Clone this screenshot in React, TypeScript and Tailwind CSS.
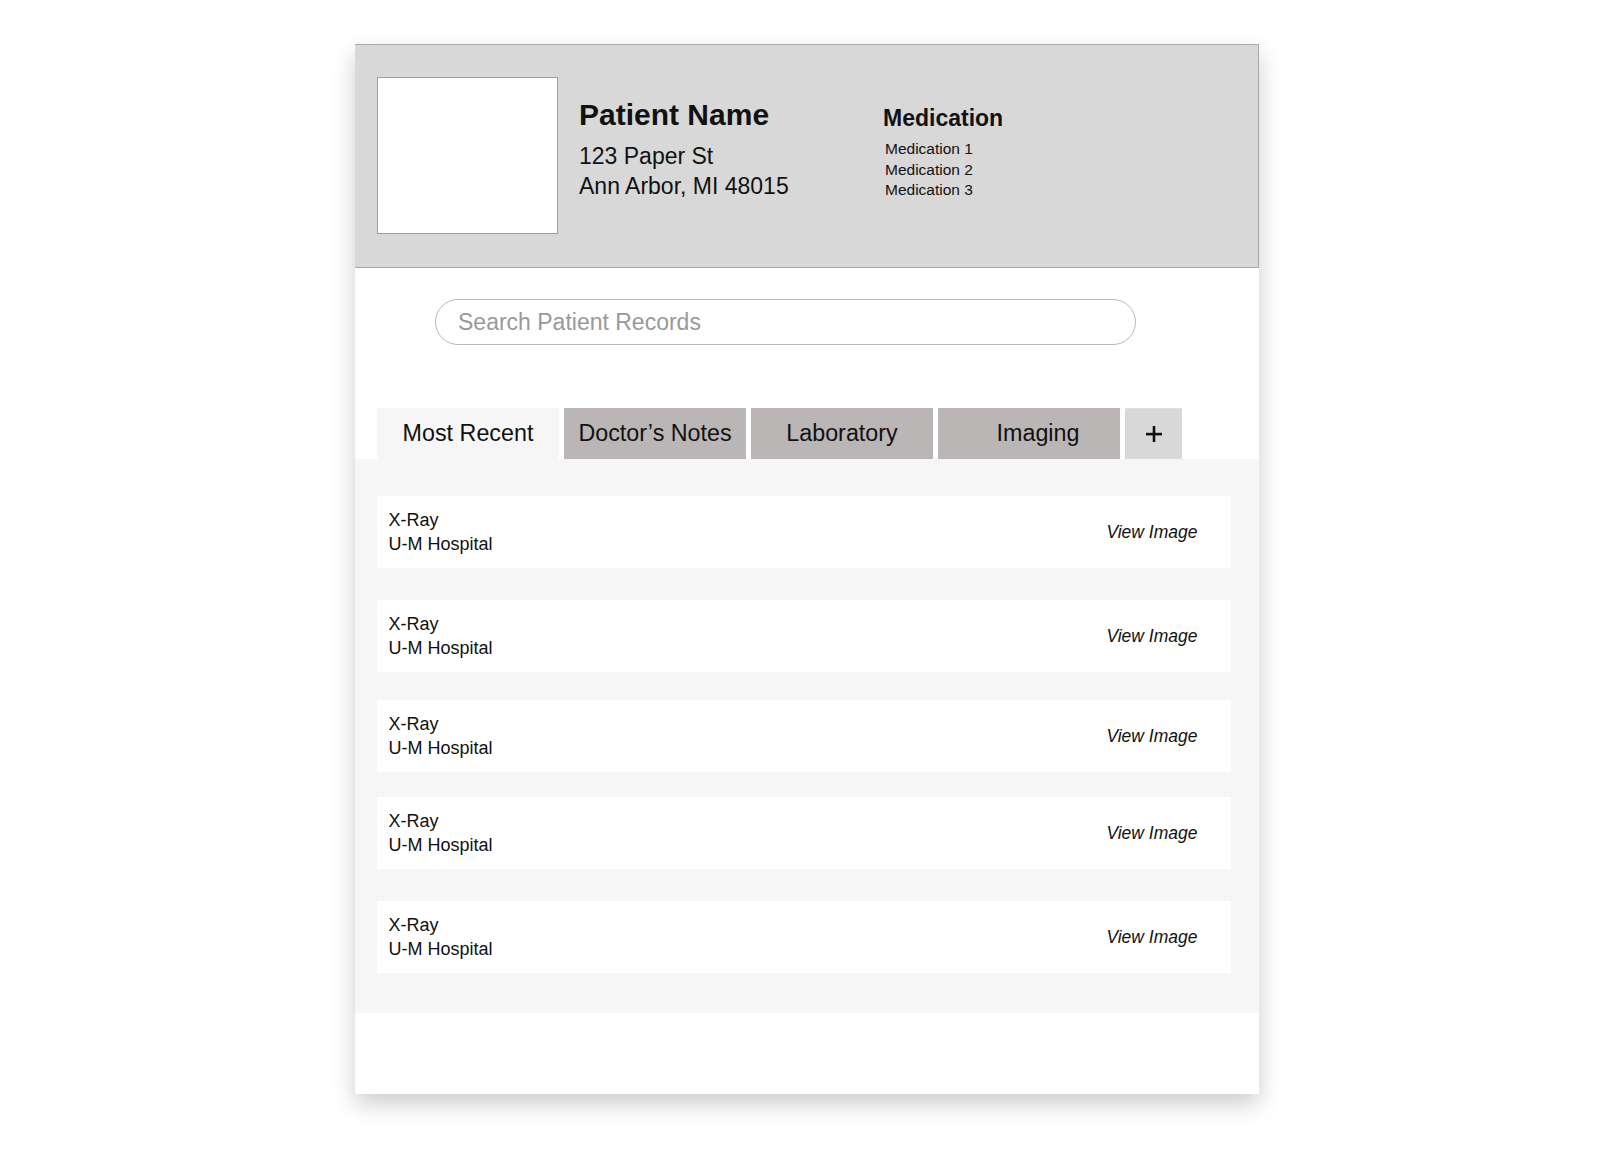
const records = [
  { id: 1, spacing: "mt-[37px]" },
  { id: 2, spacing: "mt-[32px]" },
  { id: 3, spacing: "mt-[28px]" },
  { id: 4, spacing: "mt-[25px]" },
  { id: 5, spacing: "mt-[32px]" },
]

const tabs = [
  { label: "Most Recent", className: "bg-[#f6f6f6]" },
  { label: "Doctor’s Notes", className: "bg-[#bbb6b6]" },
  { label: "Laboratory", className: "bg-[#bbb6b6]" },
  { label: "Imaging", className: "bg-[#bbb6b6] pl-[18px]" },
]

function PlusIcon() {
  return (
    <svg width="16" height="16" viewBox="0 0 16 16" fill="#111">
      <rect x="0" y="6.8" width="16" height="2.6" />
      <rect x="6.7" y="0" width="2.6" height="16" />
    </svg>
  )
}

export default function App() {
  return (
    <div className="min-h-[1152px] bg-white pt-[44px] font-['Liberation_Sans',Arial,sans-serif] text-[#111]">
      <div className="ml-[355px] flex w-[904px] flex-col bg-white shadow-[0_10px_22px_rgba(0,0,0,0.2)]">
        {/* patient header */}
        <header className="flex h-[224px] items-start border-y border-r border-[#a9a9a9] bg-[#d8d8d8] pl-[22px] pt-[32px]">
          <div className="h-[157px] w-[181px] shrink-0 border border-[#9d9d9d] bg-white" />
          <div className="ml-[21px] mt-[20px] w-[304px]">
            <h1 className="text-[30px] font-bold leading-[36px]">Patient Name</h1>
            <p className="mt-[8px] text-[23px] leading-[30px]">123 Paper St</p>
            <p className="text-[23px] leading-[30px]">Ann Arbor, MI 48015</p>
          </div>
          <div className="mt-[27px]">
            <h2 className="text-[23px] font-bold leading-[28px]">Medication</h2>
            <ul className="mt-[7px] pl-[2px] text-[15.5px] leading-[20.6px]">
              <li>Medication 1</li>
              <li>Medication 2</li>
              <li>Medication 3</li>
            </ul>
          </div>
        </header>

        {/* search */}
        <div className="pl-[80px] pt-[31px]">
          <input
            type="text"
            placeholder="Search Patient Records"
            className="h-[46px] w-[701px] rounded-full border border-[#b8b8b8] bg-white pl-[22px] text-[23px] outline-none placeholder:text-[#999]"
          />
        </div>

        {/* tabs */}
        <nav className="mt-[63px] flex h-[51px] gap-[5px] pl-[22px]">
          {tabs.map((tab) => (
            <button
              key={tab.label}
              className={`flex w-[182px] items-center justify-center text-[23.3px] ${tab.className}`}
            >
              {tab.label}
            </button>
          ))}
          <button className="flex w-[57px] items-center justify-center border-t border-[#e2e2e2] bg-[#d8d8d8]">
            <PlusIcon />
          </button>
        </nav>

        {/* records */}
        <section className="flex flex-col bg-[#f6f6f6] pb-[39.5px] pl-[22px] pr-[28.5px]">
          {records.map((record) => (
            <div
              key={record.id}
              className={`flex h-[72px] items-center justify-between bg-white pl-[11.5px] pr-[33px] ${record.spacing}`}
            >
              <div className="text-[18px] leading-[24.5px]">
                <div>X-Ray</div>
                <div>U-M Hospital</div>
              </div>
              <span className="text-[17.5px] italic">View Image</span>
            </div>
          ))}
        </section>

        <div className="h-[81.5px]" />
      </div>
    </div>
  )
}
